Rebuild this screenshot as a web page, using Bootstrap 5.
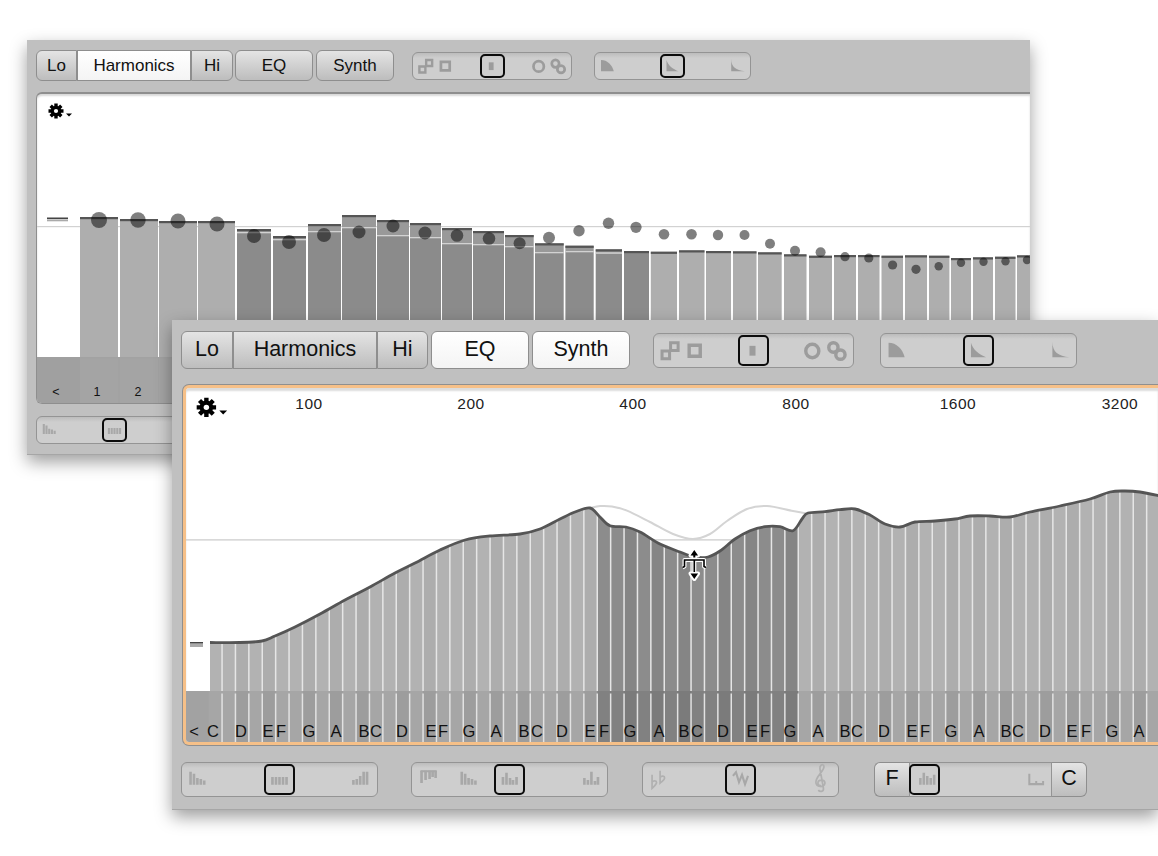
<!DOCTYPE html>
<html lang="en">
<head>
<meta charset="utf-8">
<title>Harmonics and EQ panels</title>
<link rel="stylesheet" href="https://cdn.jsdelivr.net/npm/bootstrap@5.3.0/dist/css/bootstrap.min.css">
<style>
html,body{margin:0;height:100%;background:#fff;overflow:hidden;}
body{font-family:"Liberation Sans",Arial,sans-serif;color:#111;}
.desk{position:relative;width:1158px;height:856px;overflow:hidden;}
.pane{position:absolute;background:#c0c0c0;border-bottom:1.5px solid #a6a6a6;box-shadow:0 7px 16px rgba(0,0,0,.38);}
.pane-a{left:27px;top:40px;width:1003px;height:415px;padding:10px 0 0 9px;}
.pane-b{left:172px;top:320px;width:986px;height:490px;padding:11px 0 0 9px;}
.tools{display:flex;align-items:center;}
.pane-a .tools{height:31px;}
.pane-b .tools{height:38px;}
.seg{color:#111;padding:0;border:1.5px solid #8e8e8e;border-radius:6px;line-height:1;height:100%;
 background:linear-gradient(#e4e4e4,#bdbdbd);display:flex;align-items:center;justify-content:center;
 font-family:"Liberation Sans",Arial,sans-serif;}
.seg:hover{background:linear-gradient(#e4e4e4,#bdbdbd);color:#111;border-color:#8e8e8e;}
.seg.on,.seg.on:hover{background:linear-gradient(#fff,#f4f4f4);}
.btn-group{height:100%;}
.btn-group>.seg{margin-left:0!important;}
.pane-a .seg{font-size:17px;}
.pane-b .seg{font-size:21.500px;padding-bottom:1px;}
.pane-a .w-lo{width:41px}.pane-a .w-ha{width:114px}.pane-a .w-hi{width:42px}
.pane-a .w-eq{width:78px;margin-left:2px}.pane-a .w-sy{width:78px;margin-left:3px}
.pane-b .w-lo{width:52px}.pane-b .w-ha{width:144px}.pane-b .w-hi{width:51px}
.pane-b .w-eq{width:98px;margin-left:3px}.pane-b .w-sy{width:98px;margin-left:3px}
.sld{position:relative;flex:none;border:1.5px solid #949494;border-radius:6px;background:linear-gradient(#bcbcbc,#cecece 5px,#cecece);}
.pane-b .sld{height:35px;}
.pane-a .sld{height:28px;}
.sld-art{display:block;width:100%;height:100%;}
.pane-b .w201{width:201px}.pane-b .w197{width:197px}
.pane-a .w201{width:160px}.pane-a .w197{width:157px}
.thumb{position:absolute;top:1px;bottom:1px;border:2px solid #0c0c0c;border-radius:5px;}
.pane-b .thumb{width:31px;}
.pane-a .thumb{width:25px;}
.ml-a{margin-left:18px}.ml-b{margin-left:22px}
.pane-b .ml-a{margin-left:23px}.pane-b .ml-b{margin-left:26px}
.plot{position:relative;background:#fff;overflow:hidden;}
.plot svg.chart{display:block;}
.plot-a{margin-top:11px;height:312px;border:1.5px solid #8e8e8e;border-top-width:2px;border-right:0;border-radius:6px 0 0 6px;box-shadow:inset 0 2px 2px #d8d8d8;}
.plot-b{margin:16px 0 0 2px;height:360px;border:3px solid #f6c088;border-right:0;border-radius:6px 0 0 6px;box-shadow:0 0 0 1px #8f8f8f,inset 0 3px 2px #dcdcdc;}
.gear{position:absolute;display:block;}
.plot-a .gear{left:11px;top:9px;width:27px;height:17px;}
.plot-b .gear{left:10px;top:9px;width:35px;height:22px;}
.foot{display:flex;}
.pane-a .foot{margin-top:12px;}
.pane-b .foot{margin-top:17px;}
.gap-b{margin-left:33px}.gap-c{margin-left:34px}
.joined{display:flex;height:35px;margin-left:35px;}
.joined .seg{height:35px;}
.joined .w-f{width:35px;border-radius:6px 0 0 6px;border-right:0}
.joined .w-c{width:35px;border-radius:0 6px 6px 0;border-left:0}
.joined .sld{width:143px;border-radius:0;}
</style>
</head>
<body>
<svg width="0" height="0" class="position-absolute">
<defs>
<g id="art-topo" fill="none" stroke="#9c9c9c" stroke-width="3.400">
 <path d="M9.500 18h7.500v7.500H9.500zM18 10h7.500v7.500H18z" stroke-width="3"/>
 <path d="M36.500 12.500h11v10.500h-11z"/>
 <path d="M99.500 13v9.500" stroke-width="6"/>
 <circle cx="159" cy="18" r="6.500"/>
 <circle cx="180" cy="14.500" r="4.600"/><circle cx="187" cy="21.500" r="4.600"/>
</g>
<g id="art-shape" fill="#9c9c9c">
 <path d="M9 10C17 10 23 16 25 24H9Z"/>
 <path d="M91 10C93 17 99 21 106 24H91Z"/>
 <path d="M172 9C172 19 178 23 189 24H172Z"/>
</g>
<g id="art-hist" fill="none" stroke="#a8a8a8" stroke-width="2.600">
 <path d="M10 10v12.500M13.400 12v10.500M16.800 16v6.500M20.200 17v5.500M23.600 18.500v4"/>
 <path d="M91.500 15v7.500M95 15v7.500M98.500 15v7.500M102 15v7.500M105.500 15v7.500"/>
 <path d="M172 18v4.500M175.400 17v5.500M178.800 14v8.500M182.200 10v12.500M185.600 10v12.500"/>
</g>
<g id="art-pick" fill="none" stroke="#a8a8a8" stroke-width="2.600">
 <path d="M10 9.500h16" stroke-width="2"/>
 <path d="M11 9v12M15 9v9M19 9v8M22 9v6M25 9v7"/>
 <path d="M51 10v12.500M54.400 12v10.500M57.800 16v6.500M61.200 17v5.500M64.600 18.500v4"/>
 <path d="M92 15v7.500M95.500 11v11.500M99 16v6.500M102 18v4.500M105.500 15v7.500"/>
 <path d="M173 16v6.500M176.500 18v4.500M180 10v12.500M183.500 19v3.500M186.500 15v7.500"/>
</g>
<g id="art-key" fill="none" stroke="#b0b0b0" stroke-width="1.700">
 <path d="M10.500 13v13c2.200-2 4.500-3.500 4.500-5.500s-3-2.500-4.500-.5"/>
 <path d="M18.500 9v12c2.200-2 4.500-3 4.500-5s-3-2.500-4.500-.5"/>
 <path d="M91 14l3-3.500 3 9.500 3-7 3 9 3-8" stroke="#a8a8a8" stroke-width="2.100"/>
 <path d="M176 27.500c1 2.500 5.500 2 5-1.500L177.500 7c-.5-3 3-5.500 4-2.500 1 4-8 10-8 15.500 0 5 8.500 6 9 1 0-4-7-4-7 0 0 2 2 3 3 2"/>
</g>
<g id="art-range" fill="none" stroke="#a8a8a8" stroke-width="2.600">
 <path d="M10.500 16v6.500M14 11v11.500M17.500 14v8.500M21 16v6.500M24.500 13v9.500"/>
 <path d="M121 12v10M120 22h16M128 19v3M135 19v3" stroke-width="2"/>
</g>
<g id="icon-gear">
 <g stroke="#000" stroke-width="3.400">
  <path d="M8 .500v15M.500 8h15M2.700 2.700l10.600 10.600M13.300 2.700L2.700 13.300"/>
 </g>
 <circle cx="8" cy="8" r="5.200" fill="#000"/>
 <circle cx="8" cy="8" r="2.100" fill="#fff"/>
 <path d="M18 10.500h6l-3 3z" fill="#000"/>
</g>
</defs>
</svg>

<main class="desk">

<section class="pane pane-a">
 <div class="tools">
  <div class="btn-group" role="group">
   <button type="button" class="btn seg w-lo">Lo</button>
   <button type="button" class="btn seg on w-ha rounded-0">Harmonics</button>
   <button type="button" class="btn seg w-hi">Hi</button>
  </div>
  <button type="button" class="btn seg w-eq">EQ</button>
  <button type="button" class="btn seg w-sy">Synth</button>
  <div class="sld w201 ml-a"><svg class="sld-art" viewBox="1.500 1.500 198 32" preserveAspectRatio="none"><use href="#art-topo"/></svg><span class="thumb" style="left:42.300%"></span></div>
  <div class="sld w197 ml-b"><svg class="sld-art" viewBox="1.500 1.500 194 32" preserveAspectRatio="none"><use href="#art-shape"/></svg><span class="thumb" style="left:41.800%"></span></div>
 </div>
 <div class="plot plot-a">
  <svg id="chartA" class="chart" width="994" height="309" viewBox="37 94 994 309"></svg>
  <svg class="gear" viewBox="0 0 27 17"><use href="#icon-gear"/></svg>
 </div>
 <div class="foot">
  <div class="sld w197"><svg class="sld-art" viewBox="1.500 1.500 194 32" preserveAspectRatio="none"><use href="#art-hist"/></svg><span class="thumb" style="left:41.800%"></span></div>
 </div>
</section>

<section class="pane pane-b">
 <div class="tools">
  <div class="btn-group" role="group">
   <button type="button" class="btn seg w-lo">Lo</button>
   <button type="button" class="btn seg w-ha rounded-0">Harmonics</button>
   <button type="button" class="btn seg w-hi">Hi</button>
  </div>
  <button type="button" class="btn seg on w-eq">EQ</button>
  <button type="button" class="btn seg on w-sy">Synth</button>
  <div class="sld w201 ml-a"><svg class="sld-art" viewBox="1.500 1.500 198 32" preserveAspectRatio="none"><use href="#art-topo"/></svg><span class="thumb" style="left:42.300%"></span></div>
  <div class="sld w197 ml-b"><svg class="sld-art" viewBox="1.500 1.500 194 32" preserveAspectRatio="none"><use href="#art-shape"/></svg><span class="thumb" style="left:41.800%"></span></div>
 </div>
 <div class="plot plot-b">
  <svg id="chartB" class="chart" width="972" height="354" viewBox="186 389 972 354"></svg>
  <svg class="gear" viewBox="0 0 27 17"><use href="#icon-gear"/></svg>
 </div>
 <div class="foot">
  <div class="sld w197"><svg class="sld-art" viewBox="1.500 1.500 194 32" preserveAspectRatio="none"><use href="#art-hist"/></svg><span class="thumb" style="left:41.800%"></span></div>
  <div class="sld w197 gap-b"><svg class="sld-art" viewBox="1.500 1.500 194 32" preserveAspectRatio="none"><use href="#art-pick"/></svg><span class="thumb" style="left:41.800%"></span></div>
  <div class="sld w197 gap-c"><svg class="sld-art" viewBox="1.500 1.500 194 32" preserveAspectRatio="none"><use href="#art-key"/></svg><span class="thumb" style="left:41.800%"></span></div>
  <div class="joined">
   <button type="button" class="btn seg w-f">F</button>
   <div class="sld"><svg class="sld-art" viewBox="0 1.500 143 32" preserveAspectRatio="none"><use href="#art-range"/></svg><span class="thumb" style="left:-1px"></span></div>
   <button type="button" class="btn seg w-c">C</button>
  </div>
 </div>
</section>

</main>

<script src="https://cdn.jsdelivr.net/npm/bootstrap@5.3.0/dist/js/bootstrap.bundle.min.js"></script>
<script>
(function(){
 function rect(x,y,w,h,f){return '<rect x="'+x+'" y="'+y+'" width="'+w+'" height="'+h+'" fill="'+f+'"/>';}
 /* window A: harmonics bars [x0,x1,top,ghost] */
 var bars=[[80,118,217],[120,158,219],[159,197,221],[198,235,221],[237,271,229,232],[273,306,236,239],[308,341,224,231],[342,376,215,227],[377,409,220,235],[410,441,223,237],[442,472,228,243],[473,504,231,244],[505,533.7,235,246],[535,563.7,243.3,252],[565.4,593.7,245.7,251],[595.7,622,249.3,252.5],[624,649,251],[650.8,677,251.7],[679,704.5,250.3],[706,731,251],[733,756.5,251.3],[758,781.7,252.3],[784,806.5,254.3],[809,832,255.7],[834,856,255],[858,879.5,255],[881.5,903,255.7],[905,927,255.3],[929,949.4,255.7],[951,971,258],[973,993,257.3],[995,1015.5,256.7],[1017,1032,255.3]];
 var dots=[[99,220,8],[138,220,7.7],[178,221,7.5],[217,224,7.5],[254,236,7],[289,242,7],[324,235,7],[359,232,6.5],[393,226,6.5],[425,233,6.5],[457,235.5,6.3],[489,238.5,6.3],[519.6,243.3,6],[549,237.7,6],[579,230.7,5.7],[608.5,223.3,5.7],[636,227.3,5.6],[664,234.3,5.3],[691.5,234.3,5.3],[718,235,5.2],[744.5,235,5],[770,243.7,5],[795,250.7,5],[820.6,252.3,5],[845,256.7,4.6],[868.8,258,4.6],[892.6,265,4.6],[916,269.3,4.6],[938.7,266.3,4.2],[961,262.7,4.2],[983.5,261.7,4.2],[1005.5,261.3,4.2],[1027,260,4.2]];
 var a='';
 a+=rect(37,226,994,1.2,'#d2d2d2');
 a+=rect(37,357,994,46,'#a2a2a2');
 bars.forEach(function(b,i){
  var dark=b[0]>=237&&b[0]<640,w=b[1]-b[0];
  if(b[3]){a+=rect(b[0],b[2],w,b[3]-b[2],dark?'#999':'#adadad');a+=rect(b[0],b[3],w,357-b[3],'#8b8b8b');a+=rect(b[0],b[3],w,1.3,'#d2d2d2');}
  else a+=rect(b[0],b[2],w,357-b[2],dark?'#8b8b8b':'#aeaeae');
  a+=rect(b[0],b[2],w,2.2,'#555');
  a+=rect(b[0],358.5,w,45,dark?'#828282':'#a4a4a4');
 });
 a+=rect(37,357,43,46,'#a0a0a0');
 a+=rect(47,217.5,21,1.6,'#444')+rect(47,219.5,21,1.8,'#aaa');
 dots.forEach(function(d){a+='<circle cx="'+d[0]+'" cy="'+d[1]+'" r="'+d[2]+'" fill="#000" fill-opacity=".5"/>';});
 [['<',56],['1',97],['2',138]].forEach(function(t){a+='<text x="'+t[1]+'" y="396" text-anchor="middle" font-size="12.500" fill="#111">'+t[0].replace('<','&lt;')+'</text>';});
 document.getElementById('chartA').innerHTML=a;

 /* window B: spectrum curve */
 function smooth(p){var d='M'+p[0][0]+' '+p[0][1];for(var i=0;i<p.length-1;i++){var p0=p[i?i-1:0],p1=p[i],p2=p[i+1],p3=p[i+2]||p2;
  d+='C'+(p1[0]+(p2[0]-p0[0])/6).toFixed(1)+' '+(p1[1]+(p2[1]-p0[1])/6).toFixed(1)+' '+(p2[0]-(p3[0]-p1[0])/6).toFixed(1)+' '+(p2[1]-(p3[1]-p1[1])/6).toFixed(1)+' '+p2[0]+' '+p2[1];}return d;}
 var curve=[[210,643.5],[240,643.5],[262,642],[275,637],[295,628],[320,615],[345,601],[370,588],[395,574],[415,564],[440,551],[465,541],[490,537],[520,535],[540,530],[560,520],[575,513],[590,509],[600,518],[610,526.7],[626,528],[640,533],[660,545],[680,553],[695,558],[708,558],[720,552],[735,540],[750,531.7],[765,527.7],[780,527.7],[793,531.7],[802,520],[808,514],[825,512.7],[840,510.7],[855,510],[870,516],[885,525],[900,528],[915,523],[935,522],[955,520],[970,517],[990,517],[1010,518],[1030,513],[1060,507],[1090,500],[1110,493],[1125,492],[1140,493],[1160,497]];
 var ghost=[[590,509],[600,507],[612,507.5],[627,511.7],[650,523],[673,535],[693,540],[710,535],[727,522],[747,510],[767,507],[793,512],[807,514.5]];
 var cp=smooth(curve),s='';
 s+='<defs><clipPath id="under"><path d="'+cp+'L1160 692L210 692Z"/></clipPath></defs>';
 s+=rect(186,540.3,972,1.2,'#c9c9c9');
 s+='<path d="'+smooth(ghost)+'" fill="none" stroke="#d4d4d4" stroke-width="2"/>';
 s+='<g clip-path="url(#under)">';
 var shade=[1,0,1,0,1,1,0,1,0,1,0,1];
 for(var k=-1;k<72;k++){var x0=222+13.4*k,x1=x0+13.4,c=x0+6.7,dk=c>598&&c<797,on=shade[(k+12)%12];
  s+=rect(x0.toFixed(1),480,13.8,215,dk?(on?'#8c8c8c':'#858585'):(on?'#b2b2b2':'#adadad'));}
 for(k=0;k<72;k++){s+=rect((222+13.4*k-.7).toFixed(1),480,1.5,215,'#e6e6e6');}
 s+='</g>';
 s+=rect(186,692,24,51,'#a2a2a2');
 for(k=-1;k<72;k++){x0=222+13.4*k;c=x0+6.7;dk=c>598&&c<797;on=shade[(k+12)%12];
  s+=rect(x0.toFixed(1),692,13.8,51,dk?(on?'#818181':'#7b7b7b'):(on?'#a6a6a6':'#9d9d9d'));}
 for(k=0;k<72;k++){s+=rect((222+13.4*k-.7).toFixed(1),694.5,1.5,49,'#e2e2e2');}
 s+='<path d="'+cp+'" fill="none" stroke="#555" stroke-width="2.800"/>';
 s+=rect(190,643,13,1.6,'#444')+rect(190,645,13,3,'#aaa');
 [[100,309],[200,471],[400,633],[800,796],[1600,958],[3200,1120]].forEach(function(t){s+='<text x="'+t[1]+'" y="409.500" text-anchor="middle" font-size="15.500" letter-spacing=".5" fill="#222">'+t[0]+'</text>';});
 s+='<text x="194" y="738" text-anchor="middle" font-size="16.500" fill="#111">&lt;</text>';
 'C213 D241 E268 F281 G309 A336 B364 C376 D402 E431 F443 G469 A496 B524 C537 D562 E590 F604 G630 A659 B684 C697 D723 E752 F765 G790 A818 B845 C857 D884 E912 F925 G951 A979 B1006 C1018 D1045 E1072 F1086 G1112 A1139'.split(' ').forEach(function(n){s+='<text x="'+n.slice(1)+'" y="737.500" text-anchor="middle" font-size="16.500" fill="#111">'+n[0]+'</text>';});
 var cur='M682.500 568.500l2-1v-6.500h19.500v6.500l2 1M694.300 561v12M694.300 551l-3.800 5.500h2.800v2h2v-2h2.800zM694.300 580l-3.800-5.500h7.600z';
 s+='<path d="'+cur+'" fill="none" stroke="#fff" stroke-width="4" stroke-linejoin="round"/>';
 s+='<path d="'+cur.split('M694.300 551')[0]+'" fill="none" stroke="#000" stroke-width="1.600"/>';
 s+='<path d="M694.300 551l-3.800 5.500h2.800v2h2v-2h2.800zM694.300 580l-3.800-5.500h7.600z" fill="#000"/>';
 document.getElementById('chartB').innerHTML=s;
})();
</script>
</body>
</html>
